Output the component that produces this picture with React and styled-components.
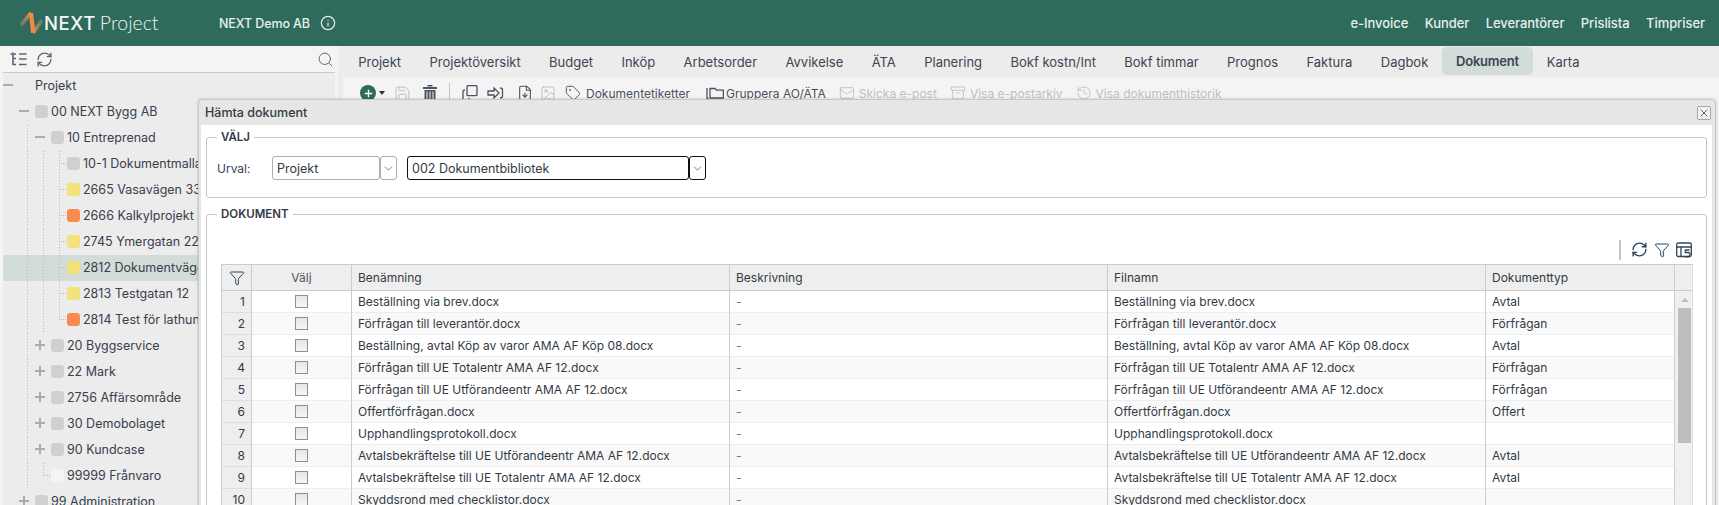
import React from "react";
import styled, { createGlobalStyle } from "styled-components";
import { RefreshCw, Funnel, Search, Info, Tag, Mail, Archive, History, Save, Image, FileDown, Plus, X, ChevronDown } from "lucide-react";

const Global = createGlobalStyle`
  html, body { margin: 0; padding: 0; background: #f4f4f4; }
  * { box-sizing: border-box; }
  body { font-family: Inter, "Noto Sans", sans-serif; color: #333a45; }
`;

const Page = styled.div`
  position: relative;
  width: 1719px;
  height: 505px;
  overflow: hidden;
  background: #f4f4f4;
`;

const Header = styled.header`
  height: 46px;
  background: #2f6b5c;
  display: flex;
  align-items: center;
  color: #e8efec;
  padding: 0 14px 0 20px;
`;
const Logo = styled.div`
  display: flex;
  align-items: center;
  width: 199px;
`;
const LogoNext = styled.span`
  font: 500 18.5px/1 Inter, sans-serif;
  letter-spacing: 0.6px;
  color: #f4f8f6;
`;
const LogoProject = styled.span`
  font: 300 19.5px/1 Lato, sans-serif;
  color: #eef3f1;
  margin-left: 4px;
`;
const Company = styled.span`
  font-size: 12.5px;
  font-weight: 500;
  letter-spacing: -0.1px;
  margin-right: 10px;
`;
const TopNav = styled.nav`
  margin-left: auto;
  display: flex;
  gap: 16.4px;
  font-size: 13px;
  font-weight: 500;
  letter-spacing: -0.05px;
`;

const Body = styled.div`
  display: flex;
  height: 459px;
`;
const Sidebar = styled.aside`
  width: 338px;
  padding: 0 3px;
  flex: none;
`;
const SideTools = styled.div`
  height: 27px;
  display: flex;
  align-items: center;
  gap: 9px;
  padding: 0 1px 0 7px;
  border-bottom: 1px solid #c9cbcd;
  color: #5b6776;
  & > :last-child { margin-left: auto; }
`;
const Tree = styled.div`
  background: #ececec;
  height: 440px;
  overflow: hidden;
`;
const TreeRow = styled.div`
  height: 26px;
  padding-bottom: 2px;
  display: flex;
  align-items: center;
  font-size: 12.5px;
  white-space: nowrap;
  color: #38404c;
  background: ${(p) => (p.$active ? "#d2dcd8" : "transparent")};
`;
const Indent = styled.span`
  flex: none;
  align-self: flex-start;
  width: 16px;
  height: 26px;
  padding-bottom: 2px;
  display: flex;
  align-items: center;
  background-image: ${(p) =>
      p.$guide ? "repeating-linear-gradient(#b9b9b9 0 1px, transparent 1px 3px)" : "none"},
    ${(p) => (p.$branch ? "repeating-linear-gradient(90deg, #b9b9b9 0 1px, transparent 1px 2px)" : "none")};
  background-size: 1px ${(p) => (p.$last ? "12px" : "100%")}, 8px 1px;
  background-position: 8px 0, 8px 12px;
  background-repeat: no-repeat;
`;
const Toggle = styled.span`
  display: block;
  position: relative;
  width: 10px;
  height: 1.5px;
  background: #a9adb1;
  &::after {
    content: "";
    display: ${(p) => (p.$plus ? "block" : "none")};
    position: absolute;
    left: 4.25px;
    top: -4.25px;
    width: 1.5px;
    height: 10px;
    background: #a9adb1;
  }
`;
const Swatch = styled.span`
  flex: none;
  width: 13px;
  height: 13px;
  border-radius: 3px;
  margin-right: 3px;
  background: ${(p) => p.$color};
`;

const Main = styled.main`
  flex: 1;
  min-width: 0;
  display: flex;
  flex-direction: column;
  background: #ececec;
`;
const Tabs = styled.div`
  height: 31px;
  display: flex;
  align-items: flex-start;
  padding: 1px 0 0 6px;
  font-size: 13px;
  color: #3d4552;
`;
const TabItem = styled.div`
  height: 28px;
  line-height: 30px;
  padding: 0 14.2px;
  border-radius: 5px;
  white-space: nowrap;
  ${(p) => p.$active && "background:#d2dcd8;font-weight:600;line-height:28px;letter-spacing:-0.2px;padding:0 13.5px;"}
`;
const Toolbar = styled.div`
  flex: 1;
  margin-left: 5px;
  background: #f4f4f4;
  display: flex;
  align-items: flex-start;
  padding: 8px 0 0 17px;
  font-size: 12px;
  color: #4a5260;
`;
const ToolGroup = styled.span`
  display: inline-flex;
  align-items: center;
  height: 16px;
  gap: ${(p) => p.$inner ?? 4}px;
  margin-right: ${(p) => p.$gap ?? 14}px;
  white-space: nowrap;
  color: ${(p) => (p.$off ? "#bcc0c5" : "#4a5260")};
`;
const AddDot = styled.span`
  width: 16px;
  height: 16px;
  border-radius: 50%;
  background: #2f6b5c;
  color: #fff;
  display: flex;
  align-items: center;
  justify-content: center;
`;
const Caret = styled.span`
  width: 0;
  height: 0;
  margin-left: -1px;
  border: 3px solid transparent;
  border-top: 4px solid #333;
  border-bottom: 0;
`;
const ToolSep = styled.span`
  width: 1px;
  height: 20px;
  background: #c4c6c8;
  margin: -2px 12px 0 0;
`;

const Dialog = styled.section`
  position: absolute;
  left: 198px;
  top: 99px;
  width: 1518px;
  height: 420px;
  background: #e6e6e6;
  border: 1px solid #c8c8c8;
  border-radius: 4px 4px 0 0;
  padding: 0 3px 0 2px;
  box-shadow: 0 0 3px rgba(0, 0, 0, 0.2);
`;
const TitleBar = styled.div`
  height: 25px;
  display: flex;
  align-items: center;
  justify-content: space-between;
  padding: 0 1px 0 4px;
  font-size: 12.5px;
  font-weight: 500;
  color: #333a45;
`;
const CloseBtn = styled.span`
  width: 14px;
  height: 14px;
  border: 1px solid #a5a5a5;
  border-radius: 2px;
  background: #f2f2f2;
  display: flex;
  align-items: center;
  justify-content: center;
  color: #333;
`;
const DialogBody = styled.div`
  background: #fff;
  height: 400px;
  padding: 5px 5px 0;
`;
const Group = styled.fieldset`
  margin: 0 0 9px;
  min-width: 0;
  border: 1px solid #c3c8cc;
  border-radius: 3px;
  padding: ${(p) => p.$pad};
`;
const Legend = styled.legend`
  font-size: 11.5px;
  line-height: 14px;
  font-weight: 600;
  color: #333a45;
  padding: 0 4px;
  margin-left: ${(p) => p.$left}px;
`;
const FormRow = styled.div`
  display: flex;
  align-items: center;
  height: 24px;
`;
const FieldLabel = styled.label`
  width: 55px;
  font-size: 12px;
  color: #3d4552;
`;
const Input = styled.div`
  width: ${(p) => p.$w}px;
  height: 24px;
  border: 1px solid ${(p) => (p.$focus ? "#111" : "#a9afb9")};
  border-radius: 3px;
  display: flex;
  align-items: center;
  padding-left: 4px;
  font-size: 12.5px;
  color: #333a45;
`;
const DropBtn = styled.div`
  width: 17px;
  height: 24px;
  border: 1px solid ${(p) => (p.$focus ? "#111" : "#a9afb9")};
  border-radius: 3px;
  display: flex;
  align-items: center;
  justify-content: center;
  color: #555;
  margin-right: ${(p) => p.$gap || 0}px;
`;
const GridTools = styled.div`
  height: 21px;
  display: flex;
  justify-content: flex-end;
  align-items: center;
  gap: 6px;
  color: #2f4659;
  margin-bottom: 4px;
  padding-right: 1px;
`;
const GridSep = styled.span`
  width: 2px;
  height: 20px;
  background: #c4c6c8;
  margin-right: 4px;
`;
const GridWrap = styled.div`
  display: flex;
  border-top: 1px solid #ccc;
  border-left: 1px solid #ccc;
`;
const Table = styled.table`
  table-layout: fixed;
  border-collapse: separate;
  border-spacing: 0;
  width: 1453px;
  font-size: 12px;
  color: #333a45;
  flex: none;
`;
const Th = styled.th`
  height: 26px;
  background: #eee;
  font-weight: 400;
  text-align: ${(p) => p.$align || "left"};
  padding: 0 6px;
  border-right: 1px solid #ccc;
  border-bottom: 1px solid #ccc;
  color: ${(p) => (p.$align ? "#555" : "#333a45")};
`;
const FilterTh = styled(Th)`
  padding: 0;
  line-height: 0;
  color: #2f4659;
`;
const Td = styled.td`
  height: 22px;
  padding: 0 6px;
  border-right: 1px solid #ccc;
  border-bottom: 1px solid #eee;
  white-space: nowrap;
  overflow: hidden;
  background: ${(p) => (p.$alt ? "#f9f9f9" : "#fff")};
  color: ${(p) => (p.$muted ? "#777" : "#333a45")};
`;
const IndexCell = styled(Td)`
  background: #eee;
  text-align: right;
  padding: 0 6px 0 0;
  border-bottom: 1px solid #ddd;
`;
const CheckCell = styled(Td)`
  padding: 0;
`;
const CheckBox = styled.span`
  display: block;
  width: 13px;
  height: 13px;
  margin: 0 auto;
  border: 1.5px solid #8f8f8f;
  background: linear-gradient(#e6e6e6, #f6f6f6);
`;
const Scroll = styled.div`
  width: 18px;
  flex: none;
  display: flex;
  flex-direction: column;
  border-right: 1px solid #ddd;
`;
const ScrollHead = styled.div`
  height: 26px;
  background: #eee;
  border-bottom: 1px solid #ccc;
`;
const ScrollTrack = styled.div`
  flex: 1;
  background: #f0f0f0;
  padding: 7px 1px 0 3px;
  display: flex;
  flex-direction: column;
  align-items: center;
`;
const ScrollUp = styled.span`
  width: 0;
  height: 0;
  border: 4px solid transparent;
  border-bottom: 4px solid #bbb;
  border-top: 0;
  margin-bottom: 6px;
`;
const ScrollThumb = styled.div`
  width: 13px;
  height: 135px;
  background: #bebebe;
`;

const LogoMark = () => (
  <svg width="24" height="24" viewBox="0 0 24 24" fill="none">
    <defs>
      <linearGradient id="fadeL" gradientUnits="userSpaceOnUse" x1="0" y1="14" x2="11" y2="2">
        <stop offset="0" stopColor="#8f8a6c" stopOpacity="0.5" />
        <stop offset="1" stopColor="#f08a45" />
      </linearGradient>
      <linearGradient id="fadeR" gradientUnits="userSpaceOnUse" x1="13" y1="22" x2="22" y2="9">
        <stop offset="0" stopColor="#f08a45" />
        <stop offset="1" stopColor="#8f8a6c" stopOpacity="0.5" />
      </linearGradient>
    </defs>
    <path d="M0.5 14.5 L11 2" stroke="url(#fadeL)" strokeWidth="3.6" />
    <path d="M9 2 L13 2 L15.5 22 L11 22 Z" fill="#f08a45" />
    <path d="M13 22 L22 9" stroke="url(#fadeR)" strokeWidth="3.6" />
  </svg>
);
const TreeListIcon = () => (
  <svg width="17" height="15" viewBox="0 0 17 15" fill="none" stroke="currentColor" strokeWidth="1.6">
    <path d="M3 0.5V12.5H6M3 6.5H6M0.5 2H6M9 2H16.5M9 7H16.5M9 12.5H16.5" />
  </svg>
);
const TrashIcon = () => (
  <svg width="14" height="16" viewBox="0 0 14 16" fill="#4d5560">
    <path d="M0 2h14v2H0zM4.5 0h5v1.5h-5zM1.5 5h11v11h-11z" />
    <path d="M4 6.5v8M7 6.5v8M10 6.5v8" stroke="#f4f4f4" strokeWidth="1" />
  </svg>
);
const CopyIcon = () => (
  <svg width="17" height="16" viewBox="0 0 17 16" fill="none" stroke="#4a5260" strokeWidth="1.3">
    <rect x="5" y="0.7" width="10" height="10" rx="1" />
    <path d="M1 15V6.5Q1 5 3 5M6 14h2" />
  </svg>
);
const SendIcon = () => (
  <svg width="17" height="16" viewBox="0 0 17 16" fill="none" stroke="#4a5260" strokeWidth="1.3">
    <path d="M1 6h6V3l5 5-5 5v-3H1z" />
    <path d="M13 3q2.5 0 2.5 2v6q0 2-2.5 2" />
  </svg>
);
const FolderGroupIcon = () => (
  <svg width="18" height="16" viewBox="0 0 18 16" fill="none" stroke="#4a5260" strokeWidth="1.3">
    <path d="M4 13V3.5h5l1.5 1.6H17.4V13z" />
    <path d="M1 3v10.5h1.5" />
  </svg>
);
const ResetTableIcon = () => (
  <svg width="16" height="16" viewBox="0 0 16 16" fill="none" stroke="currentColor" strokeWidth="1.3">
    <rect x="0.7" y="1" width="14.6" height="13.5" rx="1.5" />
    <path d="M0.7 5H15.3M5 5V14.5" />
    <path d="M13.5 8H9.3V10.5H12.5Q14 10.5 14 12.5T12 14.8H9" />
  </svg>
);

const topLinks = ["e-Invoice", "Kunder", "Leverantörer", "Prislista", "Timpriser"];
const tabs = ["Projekt", "Projektöversikt", "Budget", "Inköp", "Arbetsorder", "Avvikelse", "ÄTA", "Planering", "Bokf kostn/Int", "Bokf timmar", "Prognos", "Faktura", "Dagbok", "Dokument", "Karta"];

const G = "#d0d0d0", Y = "#f3e27b", O = "#f78c4e", W = "#f4f4f4";
const tree = [
  { parts: ["toggle", "blank"], label: "Projekt" },
  { parts: ["blank", "toggle"], color: G, label: "00 NEXT Bygg AB" },
  { parts: ["blank", "guide", "toggle"], color: G, label: "10 Entreprenad" },
  { parts: ["blank", "guide", "guide", "branch"], color: G, label: "10-1 Dokumentmallar" },
  { parts: ["blank", "guide", "guide", "branch"], color: Y, label: "2665 Vasavägen 33" },
  { parts: ["blank", "guide", "guide", "branch"], color: O, label: "2666 Kalkylprojekt" },
  { parts: ["blank", "guide", "guide", "branch"], color: Y, label: "2745 Ymergatan 22" },
  { parts: ["blank", "guide", "guide", "branch"], color: Y, label: "2812 Dokumentvägen", active: true },
  { parts: ["blank", "guide", "guide", "branch"], color: Y, label: "2813 Testgatan 12" },
  { parts: ["blank", "guide", "guide", "last"], color: O, label: "2814 Test för lathund" },
  { parts: ["blank", "guide", "plus"], color: G, label: "20 Byggservice" },
  { parts: ["blank", "guide", "plus"], color: G, label: "22 Mark" },
  { parts: ["blank", "guide", "plus"], color: G, label: "2756 Affärsområde" },
  { parts: ["blank", "guide", "plus"], color: G, label: "30 Demobolaget" },
  { parts: ["blank", "guide", "plus"], color: G, label: "90 Kundcase" },
  { parts: ["blank", "guide", "last"], color: W, label: "99999 Frånvaro" },
  { parts: ["blank", "plus"], color: G, label: "99 Administration" },
];

const docs = [
  ["Beställning via brev.docx", "Avtal"],
  ["Förfrågan till leverantör.docx", "Förfrågan"],
  ["Beställning, avtal Köp av varor AMA AF Köp 08.docx", "Avtal"],
  ["Förfrågan till UE Totalentr AMA AF 12.docx", "Förfrågan"],
  ["Förfrågan till UE Utförandeentr AMA AF 12.docx", "Förfrågan"],
  ["Offertförfrågan.docx", "Offert"],
  ["Upphandlingsprotokoll.docx", ""],
  ["Avtalsbekräftelse till UE Utförandeentr AMA AF 12.docx", "Avtal"],
  ["Avtalsbekräftelse till UE Totalentr AMA AF 12.docx", "Avtal"],
  ["Skyddsrond med checklistor.docx", ""],
];

const columnWidths = [30, 100, 378, 378, 378, 189];

const renderPart = (part, i) => {
  if (part === "toggle") return <Indent key={i}><Toggle /></Indent>;
  if (part === "plus") return <Indent key={i}><Toggle $plus /></Indent>;
  if (part === "guide") return <Indent key={i} $guide />;
  if (part === "branch") return <Indent key={i} $guide $branch />;
  if (part === "last") return <Indent key={i} $guide $branch $last />;
  return <Indent key={i} />;
};

export default function App() {
  return (
    <Page>
      <Global />
      <Header>
        <Logo>
          <LogoMark />
          <LogoNext>NEXT</LogoNext>
          <LogoProject>Project</LogoProject>
        </Logo>
        <Company>NEXT Demo AB</Company>
        <Info size={16} strokeWidth={1.8} />
        <TopNav>
          {topLinks.map((l) => <span key={l}>{l}</span>)}
        </TopNav>
      </Header>
      <Body>
        <Sidebar>
          <SideTools>
            <TreeListIcon />
            <RefreshCw size={17} strokeWidth={1.9} />
            <Search size={17} strokeWidth={1.4} />
          </SideTools>
          <Tree>
            {tree.map((n) => (
              <TreeRow key={n.label} $active={n.active}>
                {n.parts.map(renderPart)}
                {n.color && <Swatch $color={n.color} />}
                {n.label}
              </TreeRow>
            ))}
          </Tree>
        </Sidebar>
        <Main>
          <Tabs>
            {tabs.map((t) => <TabItem key={t} $active={t === "Dokument"}>{t}</TabItem>)}
          </Tabs>
          <Toolbar>
            <ToolGroup $gap={9}><AddDot><Plus size={11} strokeWidth={3} /></AddDot><Caret /></ToolGroup>
            <ToolGroup $off $gap={12}><Save size={17} strokeWidth={1.4} /></ToolGroup>
            <ToolGroup $gap={12}><TrashIcon /></ToolGroup>
            <ToolSep />
            <ToolGroup $gap={8}><CopyIcon /></ToolGroup>
            <ToolGroup $gap={13}><SendIcon /></ToolGroup>
            <ToolGroup $gap={7}><FileDown size={16} strokeWidth={1.6} /></ToolGroup>
            <ToolGroup $off $gap={9}><Image size={16} strokeWidth={1.5} /></ToolGroup>
            <ToolGroup $inner={5} $gap={16}><Tag size={16} strokeWidth={1.4} />Dokumentetiketter</ToolGroup>
            <ToolGroup $inner={2} $gap={13}><FolderGroupIcon />Gruppera AO/ÄTA</ToolGroup>
            <ToolGroup $off $gap={13}><Mail size={16} strokeWidth={1.4} />Skicka e-post</ToolGroup>
            <ToolGroup $off $gap={13}><Archive size={16} strokeWidth={1.4} />Visa e-postarkiv</ToolGroup>
            <ToolGroup $off><History size={16} strokeWidth={1.4} />Visa dokumenthistorik</ToolGroup>
          </Toolbar>
        </Main>
      </Body>
      <Dialog>
        <TitleBar>
          Hämta dokument
          <CloseBtn><X size={12} strokeWidth={1.5} /></CloseBtn>
        </TitleBar>
        <DialogBody>
          <Group $pad="12px 15px 17px 10px">
            <Legend $left={0}>VÄLJ</Legend>
            <FormRow>
              <FieldLabel>Urval:</FieldLabel>
              <Input $w={108}>Projekt</Input>
              <DropBtn $gap={10}><ChevronDown size={13} strokeWidth={1.4} /></DropBtn>
              <Input $w={282} $focus>002 Dokumentbibliotek</Input>
              <DropBtn $focus><ChevronDown size={13} strokeWidth={1.4} /></DropBtn>
            </FormRow>
          </Group>
          <Group $pad="18px 13px 0 14px">
            <Legend $left={-4}>DOKUMENT</Legend>
            <GridTools>
              <GridSep />
              <RefreshCw size={17} strokeWidth={2} />
              <Funnel size={16} strokeWidth={1.5} />
              <ResetTableIcon />
            </GridTools>
            <GridWrap>
              <Table>
                <colgroup>
                  {columnWidths.map((w, i) => <col key={i} style={{ width: w }} />)}
                </colgroup>
                <thead>
                  <tr>
                    <FilterTh $align="center"><Funnel size={16} strokeWidth={1.5} /></FilterTh>
                    <Th $align="center">Välj</Th>
                    <Th>Benämning</Th>
                    <Th>Beskrivning</Th>
                    <Th>Filnamn</Th>
                    <Th>Dokumenttyp</Th>
                  </tr>
                </thead>
                <tbody>
                  {docs.map(([name, type], i) => {
                    const alt = i % 2 === 1;
                    return (
                      <tr key={name}>
                        <IndexCell>{i + 1}</IndexCell>
                        <CheckCell $alt={alt}><CheckBox /></CheckCell>
                        <Td $alt={alt}>{name}</Td>
                        <Td $alt={alt} $muted>-</Td>
                        <Td $alt={alt}>{name}</Td>
                        <Td $alt={alt}>{type}</Td>
                      </tr>
                    );
                  })}
                </tbody>
              </Table>
              <Scroll>
                <ScrollHead />
                <ScrollTrack>
                  <ScrollUp />
                  <ScrollThumb />
                </ScrollTrack>
              </Scroll>
            </GridWrap>
          </Group>
        </DialogBody>
      </Dialog>
    </Page>
  );
}
